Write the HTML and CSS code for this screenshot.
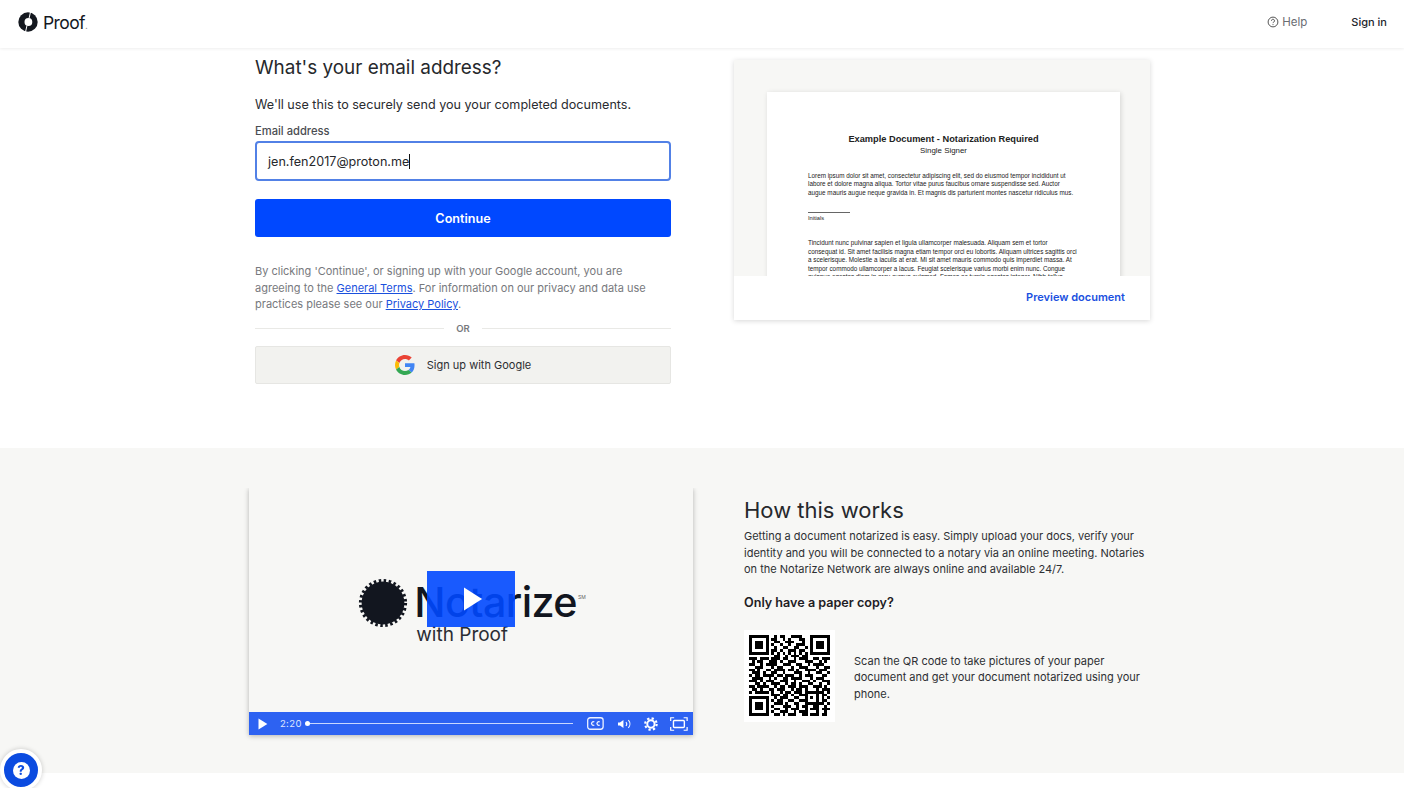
FILE: index.html
```html
<!DOCTYPE html>
<html lang="en">
<head>
    <meta charset="UTF-8">
    <title>Proof - Sign up</title>
    <link rel="stylesheet" href="styles.css">
</head>
<body>
    <header class="top-bar">
        <a class="logo" href="#">
            <svg class="logo-mark" viewBox="0 0 20 20" width="20" height="20">
                <circle cx="10" cy="10" r="9.7" fill="#14181f"/>
                <circle cx="10.4" cy="10" r="3.900" fill="#fff"/>
                <path d="M12.500 0l-1.500 6.500M7.500 20l1.500-6.500" stroke="#fff" stroke-width="1"/>
            </svg>
            <span class="logo-text">Proof<span class="logo-dot">.</span></span>
        </a>
        <nav class="top-nav">
            <a class="help-link" href="#">
                <svg viewBox="0 0 12 12" width="12" height="12" fill="none" stroke="#555" stroke-width="1">
                    <circle cx="6" cy="6" r="4.9"/>
                    <path d="M4.5 4.8a1.5 1.5 0 1 1 2.3 1.2c-.5.3-.8.6-.8 1.1"/>
                    <path d="M6 8.200v.9"/>
                </svg>
                Help
            </a>
            <a class="sign-in" href="#">Sign in</a>
        </nav>
    </header>

    <section class="signup">
        <div class="signup-form">
            <h1>What's your email address?</h1>
            <p class="lead">We'll use this to securely send you your completed documents.</p>
            <label class="field-label" for="email">Email address</label>
            <div class="email-input" id="email">jen.fen2017@proton.me<span class="caret"></span></div>
            <button class="continue-btn">Continue</button>
            <p class="terms">By clicking 'Continue', or signing up with your Google account, you are agreeing to the <a href="#">General Terms</a>. For information on our privacy and data use practices please see our <a href="#">Privacy Policy</a>.</p>
            <div class="or-row"><span>OR</span></div>
            <button class="google-btn">
                <svg viewBox="0 0 48 48" width="20" height="20">
                    <path fill="#EA4335" d="M24 9.500c3.500 0 6.700 1.200 9.200 3.600l6.900-6.900C35.900 2.400 30.500 0 24 0 14.600 0 6.500 5.400 2.600 13.200l8 6.200C12.400 13.700 17.700 9.500 24 9.500z"/>
                    <path fill="#4285F4" d="M46.900 24.500c0-1.600-.1-3.100-.4-4.500H24v9h12.900c-.6 3-2.200 5.500-4.700 7.200l7.700 6c4.500-4.200 7-10.300 7-17.700z"/>
                    <path fill="#FBBC05" d="M10.500 28.600c-.5-1.400-.8-3-.8-4.600s.3-3.200.8-4.600l-8-6.200C.9 16.500 0 20.100 0 24s.9 7.500 2.600 10.800l7.900-6.200z"/>
                    <path fill="#34A853" d="M24 48c6.500 0 11.900-2.100 15.900-5.800l-7.700-6c-2.200 1.500-4.900 2.300-8.200 2.300-6.300 0-11.600-4.200-13.500-9.900l-8 6.200C6.500 42.600 14.600 48 24 48z"/>
                </svg>
                Sign up with Google
            </button>
        </div>

        <div class="doc-card">
            <div class="doc-stage">
                <div class="doc-page">
                    <div class="doc-title">Example Document - Notarization Required</div>
                    <div class="doc-sub">Single Signer</div>
                    <div class="doc-body">
                        <div>Lorem ipsum dolor sit amet, consectetur adipiscing elit, sed do eiusmod tempor incididunt ut</div>
                        <div>labore et dolore magna aliqua. Tortor vitae purus faucibus ornare suspendisse sed. Auctor</div>
                        <div>augue mauris augue neque gravida in. Et magnis dis parturient montes nascetur ridiculus mus.</div>
                    </div>
                    <div class="doc-initials">Initials</div>
                    <div class="doc-body">
                        <div>Tincidunt nunc pulvinar sapien et ligula ullamcorper malesuada. Aliquam sem et tortor</div>
                        <div>consequat id. Sit amet facilisis magna etiam tempor orci eu lobortis. Aliquam ultrices sagittis orci</div>
                        <div>a scelerisque. Molestie a iaculis at erat. Mi sit amet mauris commodo quis imperdiet massa. At</div>
                        <div>tempor commodo ullamcorper a lacus. Feugiat scelerisque varius morbi enim nunc. Congue</div>
                        <div>quisque egestas diam in arcu cursus euismod. Fames ac turpis egestas integer. Nibh tellus</div>
                    </div>
                </div>
            </div>
            <div class="doc-footer"><a href="#">Preview document</a></div>
        </div>
    </section>

    <section class="how">
        <div class="video">
            <div class="video-stage">
                <div class="brand">
                    <svg class="seal" viewBox="0 0 50 50" width="50" height="50">
                        <circle cx="25" cy="25" r="21.400" fill="#12161f"/>
                        <circle cx="25" cy="25" r="22.500" fill="none" stroke="#12161f" stroke-width="3.200" stroke-dasharray="2.525 2.525"/>
                    </svg>
                    <div class="brand-words">
                        <div class="brand-name">Notarize<sup>SM</sup></div>
                        <div class="brand-sub">with Proof</div>
                    </div>
                </div>
                <div class="big-play">
                    <svg viewBox="0 0 20 24" width="19" height="24"><path d="M0 0l19 12L0 24z" fill="#fff"/></svg>
                </div>
            </div>
            <div class="controls">
                <svg viewBox="0 0 10 12" width="10" height="12"><path d="M.5.5l9 5.500-9 5.500z" fill="#fff"/></svg>
                <span class="time">2:20</span>
                <div class="track"></div>
                <svg viewBox="0 0 17 13" width="17" height="13" fill="none" stroke="#eef2ff" stroke-width="1.300">
                    <rect x=".7" y=".7" width="15.600" height="11.600" rx="2.500"/>
                    <path d="M7.400 5a1.800 1.800 0 1 0 0 3M12.900 5a1.800 1.800 0 1 0 0 3"/>
                </svg>
                <svg viewBox="0 0 15 12" width="15" height="12" fill="none" stroke="#fff" stroke-width="1.100">
                    <path d="M1 4.500h2L6.500 2v8L3 7.500H1z" fill="#fff" stroke="none"/>
                    <path d="M9 4a3 3 0 0 1 0 4M11.500 2a6 6 0 0 1 0 8"/>
                </svg>
                <svg viewBox="0 0 14 14" width="14" height="14">
                    <circle cx="7" cy="7" r="3.700" fill="none" stroke="#fff" stroke-width="2"/>
                    <circle cx="7" cy="7" r="5.800" fill="none" stroke="#fff" stroke-width="2.200" stroke-dasharray="2.300 2.250"/>
                </svg>
                <svg viewBox="0 0 18 14" width="18" height="14" fill="none" stroke="#fff" stroke-width="1.200">
                    <path d="M.7 4V.7h3.500M13.800.7h3.500V4M.7 10v3.300h3.500M13.800 13.300h3.500V10"/>
                    <rect x="3.500" y="3.500" width="11" height="7" rx="1" stroke-width="1.400"/>
                </svg>
            </div>
        </div>

        <div class="how-text">
            <h2>How this works</h2>
            <p class="how-copy">Getting a document notarized is easy. Simply upload your docs, verify your identity and you will be connected to a notary via an online meeting. Notaries on the Notarize Network are always online and available 24/7.</p>
            <h3>Only have a paper copy?</h3>
            <div class="qr-row">
                <div class="qr-box">
                    <svg viewBox="0 0 29 29" width="81" height="81" fill="none" stroke="#000" stroke-width="1" shape-rendering="crispEdges">
                        <path d="M0 .5h7M9 .5h1M11 .5h2M15 .5h4M22 .5h7
                        M0 1.500h1M6 1.500h1M8 1.500h2M12 1.500h1M14 1.500h1M18 1.500h2M22 1.500h1M28 1.500h1
                        M0 2.500h1M2 2.500h3M6 2.500h1M9 2.500h2M13 2.500h3M19 2.500h1M22 2.500h1M24 2.500h3M28 2.500h1
                        M0 3.500h1M2 3.500h3M6 3.500h1M8 3.500h1M11 3.500h1M14 3.500h1M17 3.500h3M22 3.500h1M24 3.500h3M28 3.500h1
                        M0 4.500h1M2 4.500h3M6 4.500h1M9 4.500h1M12 4.500h2M16 4.500h2M20 4.500h1M22 4.500h1M24 4.500h3M28 4.500h1
                        M0 5.500h1M6 5.500h1M8 5.500h2M11 5.500h1M14 5.500h3M18 5.500h2M22 5.500h1M28 5.500h1
                        M0 6.500h7M8 6.500h1M10 6.500h1M12 6.500h1M14 6.500h1M16 6.500h1M18 6.500h1M20 6.500h1M22 6.500h7
                        M9 7.500h2M13 7.500h1M15 7.500h3M19 7.500h2
                        M0 8.500h3M4 8.500h3M8 8.500h3M12 8.500h2M16 8.500h1M18 8.500h3M23 8.500h2M26 8.500h3
                        M1 9.500h1M3 9.500h2M7 9.500h3M11 9.500h1M14 9.500h3M20 9.500h3M25 9.500h1M27 9.500h1
                        M0 10.500h2M4 10.500h1M6 10.500h4M12 10.500h3M17 10.500h2M21 10.500h1M23 10.500h4
                        M2 11.500h3M8 11.500h1M10 11.500h2M15 11.500h1M18 11.500h3M24 11.500h1M27 11.500h2
                        M0 12.500h2M3 12.500h1M6 12.500h2M9 12.500h4M14 12.500h2M17 12.500h1M20 12.500h4M25 12.500h3
                        M1 13.500h3M5 13.500h1M8 13.500h2M12 13.500h1M16 13.500h3M21 13.500h1M24 13.500h2M28 13.500h1
                        M0 14.500h1M2 14.500h2M5 14.500h4M10 14.500h2M13 14.500h3M18 14.500h1M20 14.500h3M26 14.500h2
                        M1 15.500h4M7 15.500h1M9 15.500h1M12 15.500h2M15 15.500h4M22 15.500h1M24 15.500h3
                        M0 16.500h3M4 16.500h1M6 16.500h3M11 16.500h3M16 16.500h1M19 16.500h3M23 16.500h1M26 16.500h3
                        M2 17.500h2M5 17.500h1M8 17.500h3M13 17.500h1M15 17.500h2M18 17.500h1M21 17.500h2M25 17.500h1M28 17.500h1
                        M0 18.500h2M3 18.500h3M6 18.500h1M9 18.500h1M11 18.500h2M14 18.500h3M18 18.500h3M23 18.500h3M27 18.500h1
                        M1 19.500h2M4 19.500h1M7 19.500h2M10 19.500h3M15 19.500h1M17 19.500h2M20 19.500h1M24 19.500h1M26 19.500h3
                        M0 20.500h1M2 20.500h4M6 20.500h1M8 20.500h1M11 20.500h1M13 20.500h2M16 20.500h3M20 20.500h7M28 20.500h1
                        M8 21.500h3M12 21.500h2M15 21.500h1M18 21.500h3M24 21.500h1M26 21.500h2
                        M0 22.500h7M9 22.500h1M11 22.500h3M16 22.500h2M20 22.500h1M22 22.500h1M24 22.500h1M26 22.500h1M28 22.500h1
                        M0 23.500h1M6 23.500h1M8 23.500h1M10 23.500h2M14 23.500h2M18 23.500h3M24 23.500h1M26 23.500h2
                        M0 24.500h1M2 24.500h3M6 24.500h1M9 24.500h3M13 24.500h1M16 24.500h2M20 24.500h7M28 24.500h1
                        M0 25.500h1M2 25.500h3M6 25.500h1M8 25.500h1M12 25.500h3M17 25.500h1M19 25.500h2M23 25.500h2M27 25.500h1
                        M0 26.500h1M2 26.500h3M6 26.500h1M9 26.500h2M13 26.500h1M15 26.500h3M20 26.500h1M22 26.500h3M26 26.500h3
                        M0 27.500h1M6 27.500h1M8 27.500h1M11 27.500h3M16 27.500h1M18 27.500h3M24 27.500h1M27 27.500h1
                        M0 28.500h7M9 28.500h2M12 28.500h1M14 28.500h3M19 28.500h2M22 28.500h3M26 28.500h2"/>
                    </svg>
                </div>
                <p class="qr-copy">Scan the QR code to take pictures of your paper document and get your document notarized using your phone.</p>
            </div>
        </div>
    </section>

    <button class="help-bubble">
        <span>?</span>
    </button>
</body>
</html>
```

FILE: styles.css
```css
* {
    box-sizing: border-box;
}
html, body {
    height: 100%;
}
body {
    margin: 0;
    font-family: Inter, "Noto Sans", sans-serif;
    background: #fff;
    color: #22252b;
    overflow: hidden;
}
a {
    text-decoration: none;
    color: inherit;
}
button {
    font-family: inherit;
    cursor: pointer;
}

/* top bar */
.top-bar {
    height: 48px;
    display: flex;
    align-items: center;
    justify-content: space-between;
    padding: 0 17px 0 18px;
    box-shadow: 0 1px 3px rgba(0,0,0,0.07);
}
.logo {
    display: flex;
    align-items: center;
    gap: 5px;
    margin-top: -4px;
}
.logo-text {
    font-size: 17.5px;
    letter-spacing: -0.6px;
    color: #14181f;
}
.logo-dot {
    font-size: 10px;
    color: #888;
}
.top-nav {
    display: flex;
    align-items: center;
    gap: 44px;
    margin-top: -4px;
    font-size: 11px;
}
.help-link {
    display: flex;
    align-items: center;
    gap: 3px;
    font-size: 11.5px;
    color: #6a6d72;
}
.sign-in {
    font-weight: 500;
    color: #22252b;
}

/* sign up area */
.signup {
    height: 400px;
    padding: 8px 0 0 255px;
    display: flex;
    align-items: flex-start;
    gap: 63px;
}
.signup-form {
    width: 416px;
}
h1 {
    margin: 0;
    font-size: 18.9px;
    line-height: 24px;
    font-weight: 400;
    color: #26282c;
}
.lead {
    margin: 15px 0 0;
    font-size: 12.6px;
    line-height: 20px;
    color: #2a2c30;
}
.field-label {
    display: block;
    margin-top: 8px;
    font-size: 11.2px;
    line-height: 16px;
    font-weight: 500;
    color: #4a4d52;
}
.email-input {
    margin-top: 2px;
    height: 40px;
    display: flex;
    align-items: center;
    padding: 0 11px;
    font-size: 12.6px;
    color: #26282c;
    border: 2px solid #5281e6;
    border-radius: 4px;
}
.caret {
    width: 1px;
    height: 15px;
    background: #111;
}
.continue-btn {
    display: block;
    width: 100%;
    height: 38px;
    margin-top: 18px;
    border: 0;
    border-radius: 3px;
    background: #0048ff;
    color: #fff;
    font-size: 12.6px;
    font-weight: 600;
}
.terms {
    margin: 26px 0 0;
    padding-right: 16px;
    font-size: 11px;
    line-height: 16.5px;
    color: #77797d;
}
.terms a {
    color: #1a50dd;
    text-decoration: underline;
}
.or-row {
    display: flex;
    align-items: center;
    gap: 12px;
    margin-top: 8px;
    height: 16px;
    font-size: 9.5px;
    font-weight: 600;
    color: #77797d;
}
.or-row::before, .or-row::after {
    content: "";
    flex: 1;
    height: 1px;
    background: #e9e9e6;
}
.google-btn {
    display: flex;
    align-items: center;
    justify-content: center;
    gap: 12px;
    width: 100%;
    height: 38px;
    margin-top: 9px;
    padding: 1px 0 0;
    background: #f2f2ef;
    border: 1px solid #e6e6e3;
    border-radius: 2px;
    font-size: 11px;
    color: #2c2e32;
}

/* document preview */
.doc-card {
    width: 416px;
    height: 260px;
    margin-top: 4px;
    background: #fff;
    box-shadow: 0 1px 5px rgba(0,0,0,0.16);
}
.doc-stage {
    height: 216px;
    padding: 32px 30px 0 33px;
    background: #f7f7f5;
    overflow: hidden;
}
.doc-page {
    height: 260px;
    padding: 42px 12px 0 41px;
    background: #fff;
    box-shadow: 1px 1px 5px rgba(0,0,0,0.14);
    font-family: "Liberation Sans", Arial, sans-serif;
    color: #222;
}
.doc-title {
    font-size: 9.25px;
    line-height: 11px;
    font-weight: bold;
    text-align: center;
    margin-right: 29px;
}
.doc-sub {
    font-size: 7.900px;
    line-height: 12px;
    text-align: center;
    margin-right: 29px;
}
.doc-body {
    margin-top: 15px;
    font-size: 6.33px;
    line-height: 8.45px;
    white-space: nowrap;
}
.doc-initials {
    width: 42px;
    margin-top: 15px;
    border-top: 1px solid #666;
    font-size: 5.700px;
    line-height: 10px;
}
.doc-initials + .doc-body {
    margin-top: 16px;
}
.doc-footer {
    height: 44px;
    padding: 0 25px 2px 0;
    display: flex;
    align-items: center;
    justify-content: flex-end;
    background: #fff;
    font-size: 11px;
    font-weight: 600;
    color: #1a50e0;
}

/* how this works */
.how {
    height: 325px;
    padding: 40px 0 0 249px;
    display: flex;
    align-items: flex-start;
    gap: 51px;
    background: #f7f7f5;
}
.video {
    width: 444px;
    height: 247px;
    display: flex;
    flex-direction: column;
    box-shadow: 0 1px 5px rgba(0,0,0,0.28);
    clip-path: inset(0 -8px -8px -8px);
}
.video-stage {
    position: relative;
    flex: 1;
    display: flex;
    align-items: center;
    justify-content: center;
    background: #f7f7f5;
    padding: 24px 0 0 0;
}
.brand {
    display: flex;
    align-items: center;
    gap: 6px;
}
.seal {
    margin: -18px 0 0 2px;
}
.brand-words {
    position: relative;
}
.brand-name {
    font-size: 41.3px;
    line-height: 46px;
    font-weight: 500;
    letter-spacing: -0.6px;
    color: #12161f;
}
.brand-name sup {
    font-size: 5px;
    vertical-align: 18px;
    line-height: 0;
    letter-spacing: 0;
    font-weight: 400;
    color: #666;
    margin-left: 1px;
}
.brand-sub {
    font-size: 19px;
    line-height: 20px;
    color: #2a2d34;
    margin-left: 2px;
}
.big-play {
    position: absolute;
    left: 178px;
    top: 83px;
    width: 88px;
    height: 56px;
    padding-left: 4px;
    display: flex;
    align-items: center;
    justify-content: center;
    background: rgba(0,72,255,0.9);
}
.controls {
    height: 23px;
    display: flex;
    align-items: center;
    padding: 0 5px 0 9px;
    background: #2d62f2;
}
.time {
    margin-left: 12px;
    width: 26px;
    font-size: 9.5px;
    letter-spacing: 0.4px;
    color: #dfe6ff;
}
.track {
    position: relative;
    width: 270px;
    height: 1px;
    margin-right: 14px;
    background: #c9d7ff;
}
.track::before {
    content: "";
    position: absolute;
    left: -1px;
    top: -2px;
    width: 5px;
    height: 5px;
    border-radius: 50%;
    background: #fff;
}
.controls svg + svg {
    margin-left: 13px;
}
.controls svg:last-child {
    margin-left: 12px;
}
.how-text {
    width: 405px;
}
h2 {
    margin: 8px 0 0;
    font-size: 22px;
    line-height: 28px;
    font-weight: 400;
    color: #26282c;
}
.how-copy {
    margin: 4px 0 0;
    font-size: 11px;
    line-height: 16.6px;
    color: #2d2f33;
}
h3 {
    margin: 16px 0 0;
    font-size: 12.6px;
    line-height: 18px;
    font-weight: 600;
    color: #1e2024;
}
.qr-row {
    display: flex;
    align-items: center;
    gap: 19px;
    margin-top: 18px;
}
.qr-box {
    width: 91px;
    height: 92px;
    flex: none;
    display: flex;
    align-items: center;
    justify-content: center;
    background: #fff;
}
.qr-copy {
    margin: 4px 0 0;
    font-size: 11px;
    line-height: 16.6px;
    color: #2d2f33;
}

/* floating help */
.help-bubble {
    position: fixed;
    left: 0;
    top: 749px;
    width: 42px;
    height: 42px;
    border-radius: 50%;
    border: 4px solid #fff;
    background: #0b4be0;
    box-shadow: 0 0 5px rgba(0,0,0,0.2);
    display: flex;
    align-items: center;
    justify-content: center;
    padding: 0;
}
.help-bubble span {
    width: 17px;
    height: 17px;
    border-radius: 50%;
    background: #fff;
    color: #0b4be0;
    font-size: 13px;
    line-height: 17px;
    font-weight: 800;
    text-align: center;
}
```
